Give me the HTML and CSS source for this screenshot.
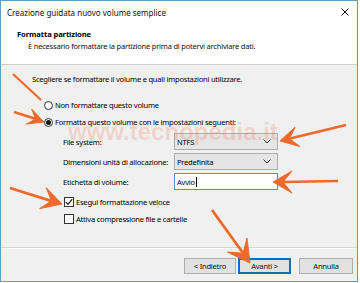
FILE: index.html
```html
<!DOCTYPE html>
<html lang="it">
<head>
<meta charset="utf-8">
<link rel="stylesheet" href="styles.css">
</head>
<body>
<div class="window">
  <div class="titlebar">
    <span class="title">Creazione guidata nuovo volume semplice</span>
    <svg class="close" width="8" height="8" viewBox="0 0 8 8"><path d="M0.5 0.5L7.5 7.5M7.5 0.5L0.5 7.5" stroke="#111" stroke-width="1"/></svg>
  </div>
  <div class="header">
    <div class="h-title">Formatta partizione</div>
    <div class="h-sub">È necessario formattare la partizione prima di potervi archiviare dati.</div>
  </div>
  <div class="content">
    <p class="intro">Scegliere se formattare il volume e quali impostazioni utilizzare.</p>
    <div class="radio r1"><span class="rb"></span><span>Non formattare questo volume</span></div>
    <div class="radio r2"><span class="rb on"></span><span>Formatta questo volume con le impostazioni seguenti:</span></div>
    <div class="form">
      <span class="lbl">File system:</span>
      <div class="select"><span>NTFS</span><svg width="8" height="5" viewBox="0 0 8 5"><path d="M0.5 0.5L4 4L7.5 0.5" fill="none" stroke="#333" stroke-width="1"/></svg></div>
      <span class="lbl">Dimensioni unità di allocazione:</span>
      <div class="select"><span>Predefinita</span><svg width="8" height="5" viewBox="0 0 8 5"><path d="M0.5 0.5L4 4L7.5 0.5" fill="none" stroke="#333" stroke-width="1"/></svg></div>
      <span class="lbl">Etichetta di volume:</span>
      <div class="input"><span>Avvio</span><span class="caret"></span></div>
    </div>
    <div class="check c1"><span class="cb"><svg width="8" height="8" viewBox="0 0 8 8"><path d="M0.8 4.2L3 6.4L7.2 1.2" fill="none" stroke="#111" stroke-width="1.1"/></svg></span><span>Esegui formattazione veloce</span></div>
    <div class="check c2"><span class="cb"></span><span>Attiva compressione file e cartelle</span></div>
  </div>
  <div class="footer">
    <button class="btn b-back">&lt; Indietro</button>
    <button class="btn b-next">Avanti &gt;</button>
    <button class="btn b-cancel">Annulla</button>
  </div>
  <div class="watermark">www.tecnopedia.it</div>
  <svg class="arrows" width="358" height="282" viewBox="0 0 358 282">
    <g fill="#ef6a2a" stroke="#ef6a2a" stroke-linejoin="round">
      <line x1="13" y1="74" x2="41" y2="100" stroke-width="2.2"/>
      <line x1="14" y1="112" x2="36" y2="119" stroke-width="2.4"/>
      <polygon points="44,122 26.3,124.1 35.7,119 31.7,109.1" stroke-width="1"/>
      <line x1="346" y1="125" x2="290" y2="138.6" stroke-width="2.6"/>
      <polygon points="280,141 295.1,127.1 289.6,138.7 299.9,146.5" stroke-width="1"/>
      <line x1="338" y1="181" x2="283" y2="182" stroke-width="2.6"/>
      <polygon points="273,182 292,171 283,182 292,193" stroke-width="1"/>
      <line x1="10" y1="188" x2="51" y2="200.8" stroke-width="2.8"/>
      <polygon points="62,204 39.7,208.6 51.5,200.8 46.1,187.6" stroke-width="1"/>
      <line x1="212" y1="210" x2="243" y2="253" stroke-width="2.8"/>
      <polygon points="250,263 227.4,252.1 243,253.2 247,238.1" stroke-width="1"/>
    </g>
  </svg>
</div>
</body>
</html>
```
FILE: styles.css
```css
* { box-sizing: border-box; }
html, body { margin: 0; padding: 0; background: #fff; }
body { font-family: "Noto Sans", "Open Sans", sans-serif; color: #000; }

.window {
  position: relative;
  width: 358px;
  height: 282px;
  border: 1px solid #5d9ec6;
  background: #f0f0f0;
  display: flex;
  flex-direction: column;
  overflow: hidden;
}

.titlebar {
  height: 22px;
  background: #fff;
  display: flex;
  align-items: center;
  justify-content: space-between;
  padding: 0 6px 0 6px;
}
.title { font-size: 8px; color: #111; }
.close { margin-right: 2px; }

.header {
  height: 42px;
  background: #fff;
  border-bottom: 1px solid #cfcfcf;
  padding: 5px 0 0 16px;
}
.h-title { font-size: 7.6px; font-weight: 700; line-height: 12px; letter-spacing: -0.1px; }
.h-sub { font-size: 7.5px; letter-spacing: -0.2px; line-height: 12px; padding-left: 11px; color: #111; }

.content {
  flex: 1;
  padding: 8px 0 0 31px;
  font-size: 7.6px;
  letter-spacing: -0.25px;
  border-bottom: 1px solid #d5d5d5;
  box-shadow: 0 1px 0 #fff;
}
.intro { margin: 0; line-height: 12px; }

.radio {
  display: flex;
  align-items: center;
  height: 14px;
  margin-left: 12px;
  gap: 2px;
}
.r1 { margin-top: 13px; }
.r2 { margin-top: 3px; }
.rb {
  width: 9px; height: 9px;
  border: 1px solid #333;
  border-radius: 50%;
  background: #fff;
  display: flex; align-items: center; justify-content: center;
}
.rb.on::after {
  content: "";
  width: 5px; height: 5px;
  border-radius: 50%;
  background: #111;
}

.form {
  display: grid;
  grid-template-columns: 111px 104px;
  grid-template-rows: 17px 17px 17px;
  row-gap: 3px;
  margin: 4px 0 0 31px;
  align-items: center;
}
.lbl { line-height: 12px; }
.select {
  height: 17px;
  background: #e5e5e5;
  border: 1px solid #adadad;
  display: flex; align-items: center; justify-content: space-between;
  padding: 0 6px 0 2px;
}
.input {
  height: 17px;
  background: #fff;
  border: 1px solid #5b8fbf;
  display: flex; align-items: center;
  padding: 0 2px;
}
.caret { width: 1px; height: 10px; background: #000; margin-left: 1px; }

.check {
  display: flex; align-items: center;
  height: 14px;
  margin-left: 32px;
  gap: 2px;
}
.c1 { margin-top: 5px; }
.c2 { margin-top: 3px; }
.cb {
  width: 10px; height: 10px;
  border: 1px solid #333;
  background: #fff;
  display: flex; align-items: center; justify-content: center;
}

.footer {
  height: 33px;
  display: flex;
  justify-content: flex-end;
  align-items: flex-start;
  padding: 10px 4px 0 0;
}
.btn {
  height: 16px;
  font-family: "Noto Sans", "Open Sans", sans-serif;
  font-size: 7.6px;
  letter-spacing: -0.25px;
  color: #111;
  background: #e1e1e1;
  border: 1px solid #adadad;
  padding: 0;
  line-height: 12px;
}
.b-back { width: 52px; }
.b-next { width: 53px; margin-left: 2px; border-color: #0a6fc2; box-shadow: inset 0 0 0 1px #0a6fc2; }
.b-cancel { width: 54px; margin-left: 8px; }

.watermark {
  position: absolute;
  left: 67px;
  top: 117px;
  font-family: "Liberation Sans", Arial, sans-serif;
  font-weight: 700;
  font-size: 24px;
  color: rgba(236, 110, 70, 0.22);
  pointer-events: none;
}
.arrows {
  position: absolute;
  left: -1px; top: -1px;
  pointer-events: none;
}
```
